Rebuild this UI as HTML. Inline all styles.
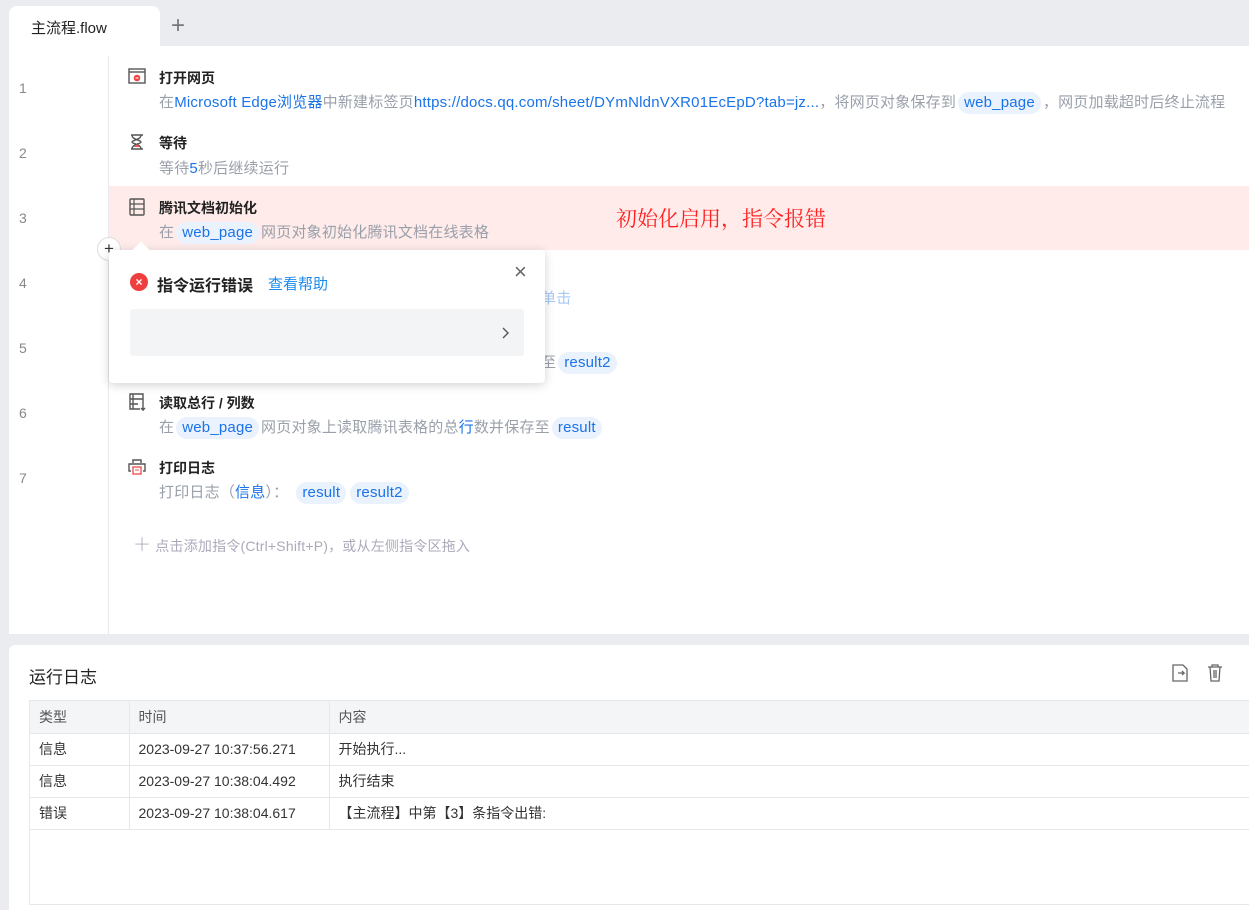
<!DOCTYPE html>
<html><head><meta charset="utf-8"><style>
*{margin:0;padding:0;box-sizing:border-box}
body{width:1249px;height:910px;overflow:hidden;background:#ebecf0;font-family:"Liberation Sans","Noto Sans CJK SC",sans-serif;position:relative;color:#222}
.a{position:absolute;white-space:nowrap}
.tab{left:9px;top:6px;width:151px;height:42px;background:#fff;border-radius:8px 8px 0 0;font-size:15px;padding:11px 0 0 22px;color:#222}
.main{left:9px;top:46px;width:1240px;height:588px;background:#fff}
.gut{left:108px;top:56px;width:1px;height:578px;background:#e8e9ec}
.ln{left:19px;font-size:14px;color:#888}
.t{left:159px;font-size:14px;font-weight:bold;color:#222}
.d{left:159px;font-size:15px;color:#9aa0aa;letter-spacing:0.2px}
.b{color:#1a73e8}
.pill{display:inline-block;background:#eaf2fe;color:#1a73e8;border-radius:11px;padding:1px 6px;margin:0 2px;line-height:20px}
.ic{left:128px}
table{border-collapse:collapse;font-size:14px}
td{height:32px;border-bottom:1px solid #e6e7ea;padding-left:9px;color:#333}
</style></head><body>
<div class="a tab">主流程.flow</div>
<div class="a" style="left:171px;top:12px;font-size:24px;color:#777;font-weight:300">+</div>
<div class="a main"></div>
<div class="a gut"></div>
<div class="a" style="left:109px;top:186px;width:1140px;height:64px;background:#feebea"></div>

<div class="a ln" style="top:80px">1</div>
<div class="a ln" style="top:145px">2</div>
<div class="a ln" style="top:210px">3</div>
<div class="a ln" style="top:275px">4</div>
<div class="a ln" style="top:340px">5</div>
<div class="a ln" style="top:405px">6</div>
<div class="a ln" style="top:470px">7</div>

<svg class="a ic" style="top:68px" width="18" height="16"><rect x="1" y="1" width="16" height="14" fill="none" stroke="#555" stroke-width="1.4"/><line x1="1" y1="4" x2="17" y2="4" stroke="#555" stroke-width="1.4"/><circle cx="9" cy="10" r="3.3" fill="#e44"/><line x1="7.5" y1="10" x2="10.5" y2="10" stroke="#fff"/></svg>
<div class="a t" style="top:68px">打开网页</div>
<div class="a d" style="top:91px">在<span class="b">Microsoft Edge浏览器</span>中新建标签页<span class="b">https://docs.qq.com/sheet/DYmNldnVXR01EcEpD?tab=jz...</span>，将网页对象保存到<span class="pill">web_page</span>，网页加载超时后终止流程</div>

<svg class="a ic" style="top:133px" width="18" height="18"><path d="M3 2h12M3 16h12M4 2c0 5 9 5 9 7s-9 2-9 7M13 2c0 5-9 5-9 7s9 2 9 7" fill="none" stroke="#555" stroke-width="1.4"/><path d="M6 14h6l-3-3z" fill="#e55"/></svg>
<div class="a t" style="top:133px">等待</div>
<div class="a d" style="top:157px">等待<span class="b">5</span>秒后继续运行</div>

<svg class="a ic" style="top:198px" width="18" height="18"><rect x="2" y="1" width="14" height="16" rx="1" fill="none" stroke="#555" stroke-width="1.4"/><path d="M2 6h14M2 11h14M6 1v16" stroke="#555" stroke-width="1.2"/></svg>
<div class="a t" style="top:198px">腾讯文档初始化</div>
<div class="a d" style="top:221px">在<span class="pill">web_page</span>网页对象初始化腾讯文档在线表格</div>
<div class="a" style="left:616px;top:203px;font-size:21px;color:#f22;font-family:'Liberation Serif','Noto Serif CJK SC',serif">初始化启用，指令报错</div>

<div class="a d" style="left:541px;top:287px;color:#a8c8f4">单击</div>
<div class="a d" style="left:541px;top:351px">至<span class="pill">result2</span></div>

<svg class="a ic" style="top:393px" width="18" height="18"><path d="M12 16H2V1h13v11M2 6h13M2 11h8M5 1v15M15 12v5l-2-2M15 17l2-2" fill="none" stroke="#555" stroke-width="1.4"/></svg>
<div class="a t" style="top:393px">读取总行 / 列数</div>
<div class="a d" style="top:416px">在<span class="pill">web_page</span>网页对象上读取腾讯表格的总<span class="b">行</span>数并保存至<span class="pill">result</span></div>

<svg class="a ic" style="top:458px" width="18" height="18"><path d="M5 5V2h8v3M3 13H1V6h16v7h-2" fill="none" stroke="#555" stroke-width="1.4"/><rect x="5" y="9" width="8" height="7" fill="none" stroke="#e55" stroke-width="1.4"/><path d="M7 12h4" stroke="#e55"/></svg>
<div class="a t" style="top:458px">打印日志</div>
<div class="a d" style="top:481px">打印日志（<span class="b">信息</span>）：<span class="pill" style="margin-left:8px">result</span><span class="pill">result2</span></div>

<div class="a d" style="left:133px;top:531px;color:#aab;font-size:14px"><span style="font-size:18px;font-weight:300">＋</span> 点击添加指令(Ctrl+Shift+P)，或从左侧指令区拖入</div>

<div class="a" style="left:97px;top:237px;width:24px;height:24px;border-radius:12px;background:#fff;border:1px solid #ddd;font-size:17px;text-align:center;line-height:21px;color:#333">+</div>
<div class="a" style="left:109px;top:250px;width:436px;height:133px;background:#fff;border-radius:4px;box-shadow:0 2px 10px rgba(0,0,0,.18)"></div>
<div class="a" style="left:135px;top:244px;width:12px;height:12px;background:#fff;transform:rotate(45deg)"></div>
<div class="a" style="left:130px;top:273px;width:18px;height:18px;border-radius:9px;background:#ef3e3e;color:#fff;font-size:12px;text-align:center;line-height:18px;font-weight:bold">×</div>
<div class="a" style="left:157px;top:272px;font-size:16px;font-weight:bold;color:#222">指令运行错误</div>
<div class="a" style="left:268px;top:273px;font-size:15px;color:#1a8cf0">查看帮助</div>
<div class="a" style="left:514px;top:259px;font-size:22px;color:#666;font-weight:300">×</div>
<div class="a" style="left:130px;top:309px;width:394px;height:47px;background:#f3f4f6;border-radius:3px"></div>
<svg class="a" style="left:500px;top:326px" width="10" height="14"><path d="M3 2l5 5-5 5" fill="none" stroke="#555" stroke-width="1.4"/></svg>

<div class="a" style="left:9px;top:645px;width:1240px;height:265px;background:#fff;border-radius:6px 0 0 0"></div>
<div class="a" style="left:29px;top:663px;font-size:17px;color:#222">运行日志</div>
<svg class="a" style="left:1172px;top:664px" width="16" height="18"><path d="M1 1h10l4 4v12H1z M6 9h6l-2-2M12 9l-2 2" fill="none" stroke="#666" stroke-width="1.3"/></svg>
<svg class="a" style="left:1207px;top:664px" width="16" height="18"><path d="M1 3h14M5 3V1h6v2M3 3l1 14h8l1-14M7 6v8M9 6v8" fill="none" stroke="#666" stroke-width="1.3"/></svg>
<div class="a" style="left:29px;top:700px;width:1220px;height:205px;border:1px solid #e6e7ea;border-right:none">
<table style="width:1220px">
<tr style="background:#f4f5f7"><td style="width:99px;color:#555">类型</td><td style="width:200px;border-left:1px solid #e6e7ea;color:#555">时间</td><td style="border-left:1px solid #e6e7ea;color:#555">内容</td></tr>
<tr><td>信息</td><td style="border-left:1px solid #e6e7ea">2023-09-27 10:37:56.271</td><td style="border-left:1px solid #e6e7ea">开始执行...</td></tr>
<tr><td>信息</td><td style="border-left:1px solid #e6e7ea">2023-09-27 10:38:04.492</td><td style="border-left:1px solid #e6e7ea">执行结束</td></tr>
<tr><td>错误</td><td style="border-left:1px solid #e6e7ea">2023-09-27 10:38:04.617</td><td style="border-left:1px solid #e6e7ea">【主流程】中第【3】条指令出错:</td></tr>
</table></div>
</body></html>
